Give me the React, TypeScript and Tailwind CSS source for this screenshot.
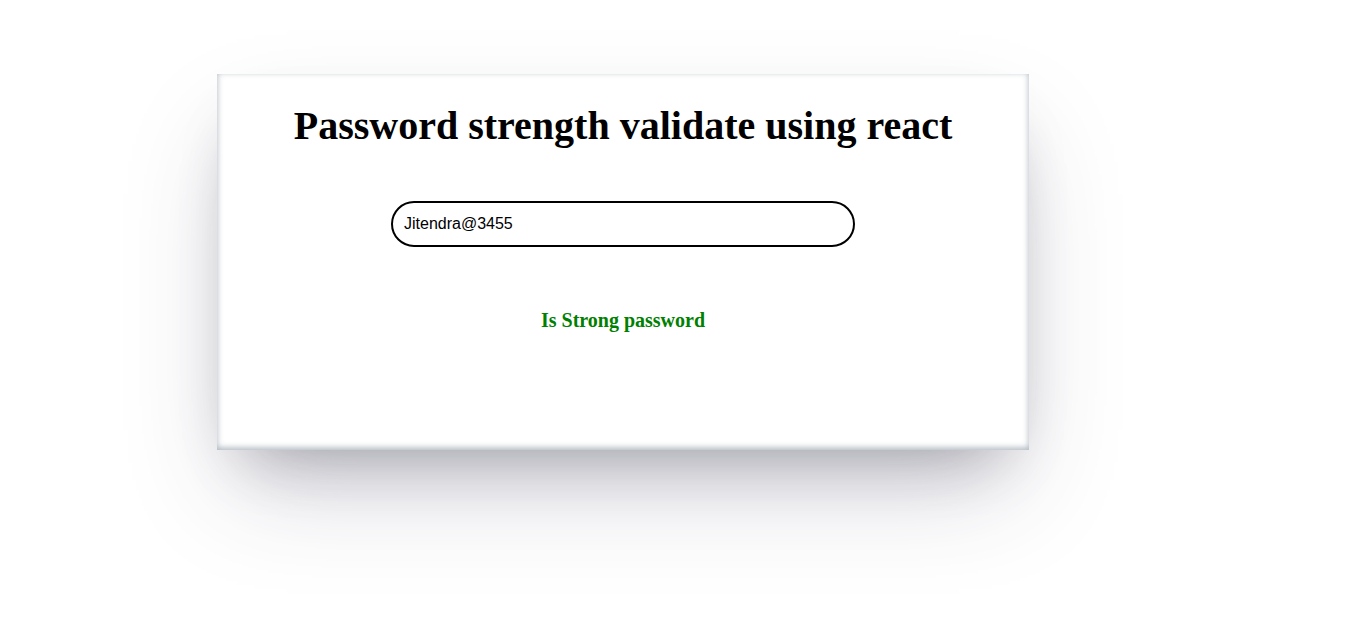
export default function App() {
  return (
    <div className="min-h-[636px] bg-white pt-[74px] font-['Liberation_Serif',serif]">
      <div className="ml-[217px] flex h-[376px] w-[812px] flex-col items-center bg-white shadow-[0_50px_100px_-20px_rgba(50,50,93,0.25),0_30px_60px_-30px_rgba(0,0,0,0.3),inset_0_-2px_6px_0_rgba(10,37,64,0.35)]">
        <h1 className="mt-[29px] text-[40px] font-bold leading-[46px] text-black">
          Password strength validate using react
        </h1>
        <input
          type="text"
          defaultValue="Jitendra@3455"
          className="mt-[52px] h-[46px] w-[464px] rounded-full border-2 border-black px-[11px] pb-[1px] font-['Liberation_Sans',sans-serif] text-[16px] text-black outline-none"
        />
        <h3 className="mt-[61px] text-[20px] font-bold leading-[24px] text-[#008000]">Is Strong password</h3>
      </div>
    </div>
  );
}
